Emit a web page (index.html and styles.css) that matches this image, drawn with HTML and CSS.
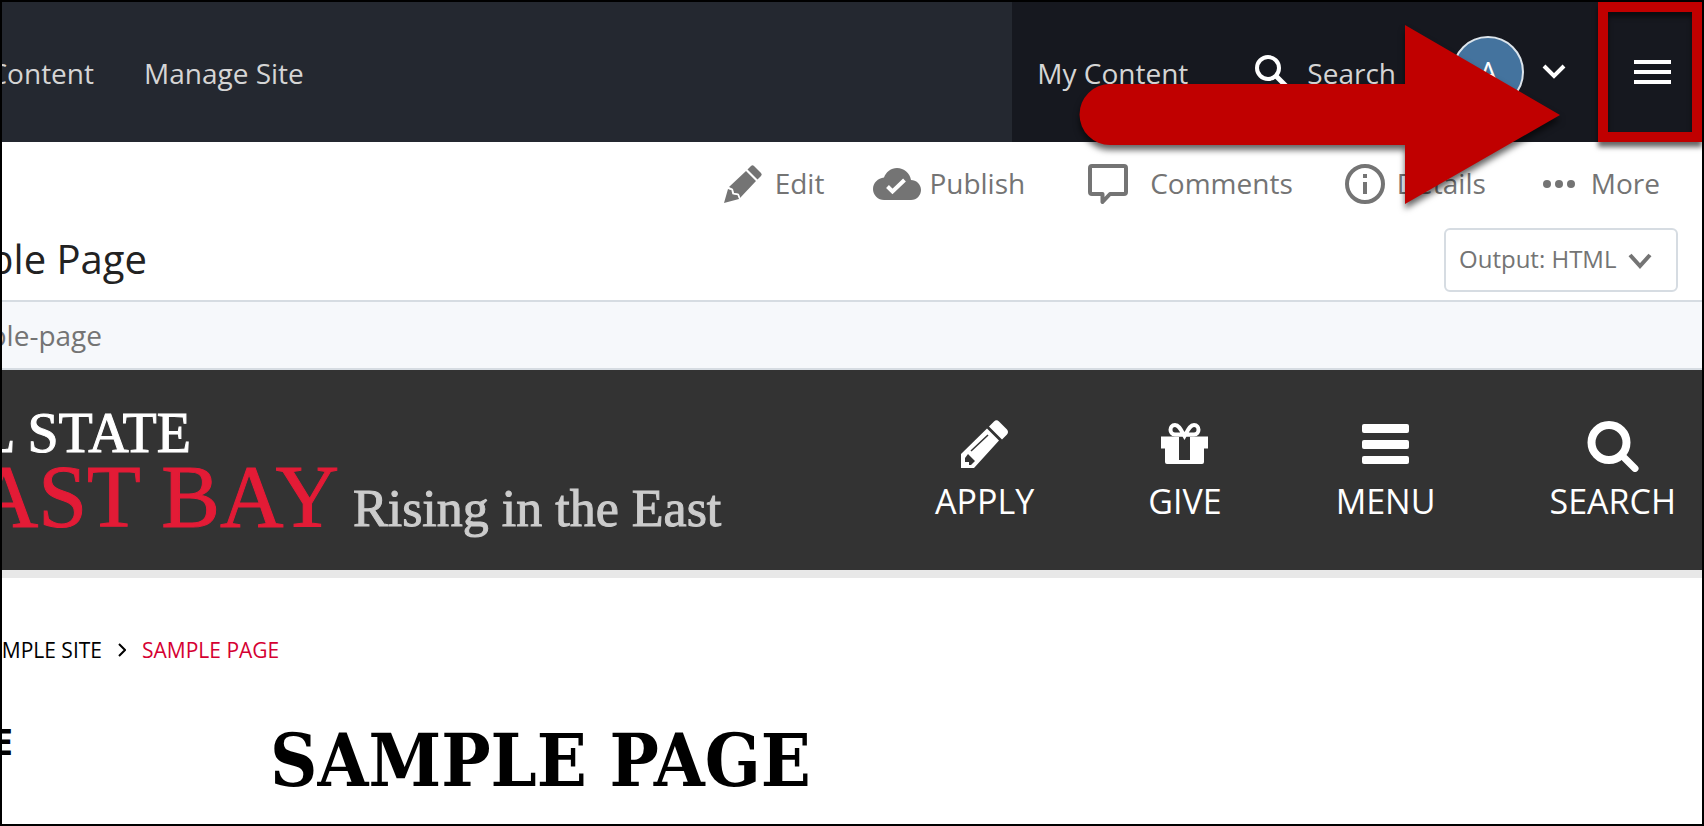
FILE: index.html
```html
<!DOCTYPE html>
<html lang="en">
<head>
<meta charset="utf-8">
<title>Sample Page</title>
<link rel="stylesheet" href="styles.css">
</head>
<body>
<div class="frame">
  <header class="topbar">
    <nav class="topbar-left">
      <a class="cut cut-nav" href="#"><span>Content</span></a>
      <a href="#">Manage Site</a>
    </nav>
    <div class="topbar-right">
      <a href="#">My Content</a>
      <button class="search-btn" type="button">
        <svg width="36" height="36" viewBox="0 0 36 36" fill="none" stroke="#fff"><circle cx="14" cy="14" r="11" stroke-width="4"/><path d="M22 22l11 11" stroke-width="5"/></svg>
        <span>Search</span>
      </button>
      <button class="user-btn" type="button" aria-label="Account">
        <span class="avatar">A</span>
        <svg width="24" height="16" viewBox="0 0 24 16" fill="none" stroke="#fff" stroke-width="4"><path d="M2 2l10 10L22 2"/></svg>
      </button>
      <button class="menu-btn" type="button" aria-label="Menu">
        <svg width="38" height="24" viewBox="0 0 38 24" fill="#fff"><path d="M0 0h37v4H0zM0 10h37v4H0zM0 20h37v4H0z"/></svg>
      </button>
    </div>
  </header>

  <div class="toolbar">
    <button class="tool tool-edit" type="button">
      <svg width="40" height="40" viewBox="0 0 40 40" fill="#747474"><path d="M1 39L5 25l4 1 1 4 5 1 1 4z"/><path d="M6 23L23 7l10 10-16 17-1-4-5-1-1-4z"/><path d="M24.500 5.500L28 2q1.500-1.500 3 0l7 7q1.500 1.500 0 3l-3.500 3.500z"/><path d="M5 24l4 1.500 1 4 5 1 2 4.500" fill="none" stroke="#fff" stroke-width="1.500"/></svg>
      <span>Edit</span>
    </button>
    <button class="tool tool-publish" type="button">
      <svg width="48" height="32" viewBox="0 0 48 32"><path fill="#747474" d="M11 32A11 11 0 0 1 0 21C0 15 5 10 11 9.500 13 4 18 0 24 0c7 0 13 5 14 12 5 0 10 4 10 10 0 5-4 10-10 10z"/><path d="M14.500 18.500l5 5L31.500 12" fill="none" stroke="#fff" stroke-width="4"/></svg>
      <span>Publish</span>
    </button>
    <button class="tool tool-comments" type="button">
      <svg width="40" height="40" viewBox="0 0 40 40" fill="none" stroke="#747474" stroke-width="4" stroke-linejoin="round"><path d="M4 2h32q2 0 2 2v24q0 2-2 2H22l-7.500 8V30H4q-2 0-2-2V4q0-2 2-2z"/></svg>
      <span>Comments</span>
    </button>
    <button class="tool tool-details" type="button">
      <svg width="40" height="40" viewBox="0 0 40 40"><circle cx="20" cy="20" r="18" fill="none" stroke="#747474" stroke-width="4"/><path fill="#747474" d="M18 10h4v4h-4zM18 18h4v12h-4z"/></svg>
      <span>Details</span>
    </button>
    <button class="tool tool-more" type="button">
      <svg width="32" height="8" viewBox="0 0 32 8" fill="#747474"><circle cx="4" cy="4" r="4"/><circle cx="16" cy="4" r="4"/><circle cx="28" cy="4" r="4"/></svg>
      <span>More</span>
    </button>
  </div>

  <div class="title-row">
    <h1 class="cut cut-title"><span>ple Page</span></h1>
    <label class="output">
      <select aria-label="Output format"><option>Output: HTML</option></select>
      <svg width="24" height="16" viewBox="0 0 24 16" fill="none" stroke="#747474" stroke-width="4"><path d="M2 2l10 11L22 2"/></svg>
    </label>
  </div>

  <div class="path-row"><div class="cut cut-path"><span>ple-page</span></div></div>

  <section class="banner">
    <div class="logo">
      <div class="logo-name">
        <div class="cut cut-state"><span>L STATE</span></div>
        <div class="cut cut-east"><span>AST BAY</span></div>
      </div>
      <div class="tagline">Rising in the East</div>
    </div>
    <nav class="banner-nav">
      <a href="#">
        <svg width="48" height="52" viewBox="0 0 48 52"><path fill="#fff" d="M0 48V34L26 8.500 38 20.500 13 48zM28 6.500l5-5q2.500-2.500 5 0l8 8q2 2.500 0 5l-5 5z"/><path d="M10 31L27 15" stroke="#333" stroke-width="1.500"/><path fill="#333" d="M4 38l3-4 7 7-4 4H8v-3H4z"/></svg>
        <span>APPLY</span>
      </a>
      <a href="#">
        <svg width="48" height="52" viewBox="0 0 48 52"><path fill="#fff" d="M0 16.500h47v12h-4V42q0 2-2 2H6q-2 0-2-2V28.500H0z"/><path fill="#333" d="M18 17h11v23H18z"/><path d="M23.500 16C20 10 18 5 14 5c-6 0-6 9.500 0 9.500h19c6 0 6-9.500 0-9.500-4 0-6 5-9.500 11z" fill="none" stroke="#fff" stroke-width="4"/></svg>
        <span>GIVE</span>
      </a>
      <a href="#">
        <svg width="48" height="52" viewBox="0 0 48 52" fill="#fff"><rect y="4" width="47" height="9" rx="2"/><rect y="20" width="47" height="9" rx="2"/><rect y="36" width="47" height="8" rx="2"/></svg>
        <span>MENU</span>
      </a>
      <a href="#">
        <svg width="52" height="52" viewBox="0 0 52 52" fill="none" stroke="#fff"><circle cx="22" cy="22.500" r="17.500" stroke-width="8"/><path d="M35 35.500l13 13" stroke-width="7" stroke-linecap="round"/></svg>
        <span>SEARCH</span>
      </a>
    </nav>
  </section>

  <nav class="crumbs">
    <a class="cut cut-crumb" href="#"><span>MPLE SITE</span></a>
    <svg width="8" height="14" viewBox="0 0 8 14" fill="none" stroke="#000" stroke-width="2"><path d="M1 1l6 6-6 6"/></svg>
    <a class="current" href="#">SAMPLE PAGE</a>
  </nav>

  <main class="content">
    <div class="side cut"><span>E</span></div>
    <h2>SAMPLE PAGE</h2>
  </main>

  <svg class="arrow" width="500" height="200" viewBox="0 0 500 200"><path fill="#c00000" d="M40 71h295V12l155 90L335 191v-59H40a30 30 0 0 1 0-61z"/></svg>
</div>
</body>
</html>
```

FILE: styles.css
```css
* { box-sizing: border-box; }
body { margin: 0; font-family: "Open Sans", "Noto Sans", sans-serif; font-size: 28px; background: #fff; }
a { color: inherit; text-decoration: none; }
button { font: inherit; color: inherit; background: none; border: 0; padding: 0; }
svg { flex: none; display: block; }
h1, h2 { margin: 0; }

.frame { position: relative; min-height: 100vh; border: 2px solid #000; overflow: hidden; }

/* Text that runs off the left edge of the frame */
.cut { display: flex; justify-content: flex-end; white-space: nowrap; }
.cut-nav { width: 92px; }
.cut-title { width: 145px; }
.cut-path { width: 100px; }
.cut-state { width: 189px; }
.cut-east { width: 337px; }
.cut-crumb { width: 100px; }

.topbar { display: flex; height: 140px; background: #242830; color: #d5d5d5; }
.topbar-left { flex: 1; display: flex; align-items: center; gap: 50px; padding-top: 2px; }
.topbar-right { display: flex; align-items: center; background: #16181f; padding-left: 25px; }
.topbar-right > a, .search-btn span { padding-top: 2px; }
.search-btn { display: flex; align-items: center; gap: 17px; margin-left: 66px; }
.user-btn { display: flex; align-items: center; gap: 18px; margin: 0 32px 0 56px; }
.avatar { width: 72px; height: 72px; border: 2px solid #dde5ec; border-radius: 50%; background: #44739e; color: #fff; line-height: 66px; text-align: center; }
.menu-btn { width: 104px; height: 140px; display: flex; align-items: center; justify-content: center; padding-left: 6px; border: 10px solid #c00000; box-shadow: 0 5px 5px rgba(0, 0, 0, .6), inset 0 5px 5px rgba(0, 0, 0, .5); }

.toolbar { display: flex; justify-content: flex-end; height: 84px; padding-right: 42px; color: #747474; }
.tool { display: flex; align-items: center; gap: 12px; }
.tool span { padding-bottom: 2px; }
.tool-publish { gap: 8px; margin-left: 49px; }
.tool-comments { gap: 22px; margin-left: 63px; }
.tool-details { margin-left: 52px; }
.tool-more { gap: 16px; margin-left: 57px; }

.title-row { display: flex; justify-content: space-between; height: 76px; padding-right: 24px; border-bottom: 2px solid #d6dce2; }
h1 { font-size: 40px; font-weight: 400; line-height: 66px; color: #222; }
.output { position: relative; width: 234px; height: 64px; margin-top: 2px; }
.output select { width: 100%; height: 100%; appearance: none; border: 2px solid #d6dce2; border-radius: 6px; background: #fff; padding: 0 13px 4px; color: #747474; font: 24px "Open Sans", "Noto Sans", sans-serif; }
.output svg { position: absolute; right: 26px; top: 25px; pointer-events: none; }
.path-row { height: 68px; line-height: 66px; background: #f6f8fb; border-bottom: 2px solid #d6dce2; color: #747474; }

.banner { display: flex; justify-content: space-between; height: 208px; padding-right: 26px; background: #333; border-bottom: 8px solid #e8e8e8; }
.logo { display: flex; align-items: last baseline; gap: 14px; height: 169px; font-family: "Liberation Serif", serif; }
.cut-state { font-size: 56px; line-height: 64px; color: #fff; -webkit-text-stroke: 1px #fff; }
.cut-east { font-size: 88px; line-height: 64px; color: #e31b36; -webkit-text-stroke: 1px #e31b36; }
.tagline { font-size: 52px; line-height: 60px; color: #ccc; -webkit-text-stroke: 1px #ccc; white-space: nowrap; }
.banner-nav { display: flex; gap: 114px; padding-top: 50px; color: #fff; font-size: 34px; line-height: 48px; }
.banner-nav a { display: flex; flex-direction: column; align-items: center; gap: 5px; }

.crumbs { display: flex; align-items: center; padding-top: 57px; font-size: 21px; line-height: 30px; }
.crumbs svg { margin: 0 16px; }
.current { color: #d50032; }
.content { display: flex; padding-top: 53px; }
.side { width: 11px; margin-right: 257px; font-weight: 700; font-size: 36px; line-height: 48px; }
h2 { font: 700 73px/84px "DejaVu Serif Condensed", "DejaVu Serif", serif; }

.arrow { position: absolute; top: 11px; right: 132px; filter: drop-shadow(0 5px 3px rgba(0, 0, 0, .6)); pointer-events: none; }
```
